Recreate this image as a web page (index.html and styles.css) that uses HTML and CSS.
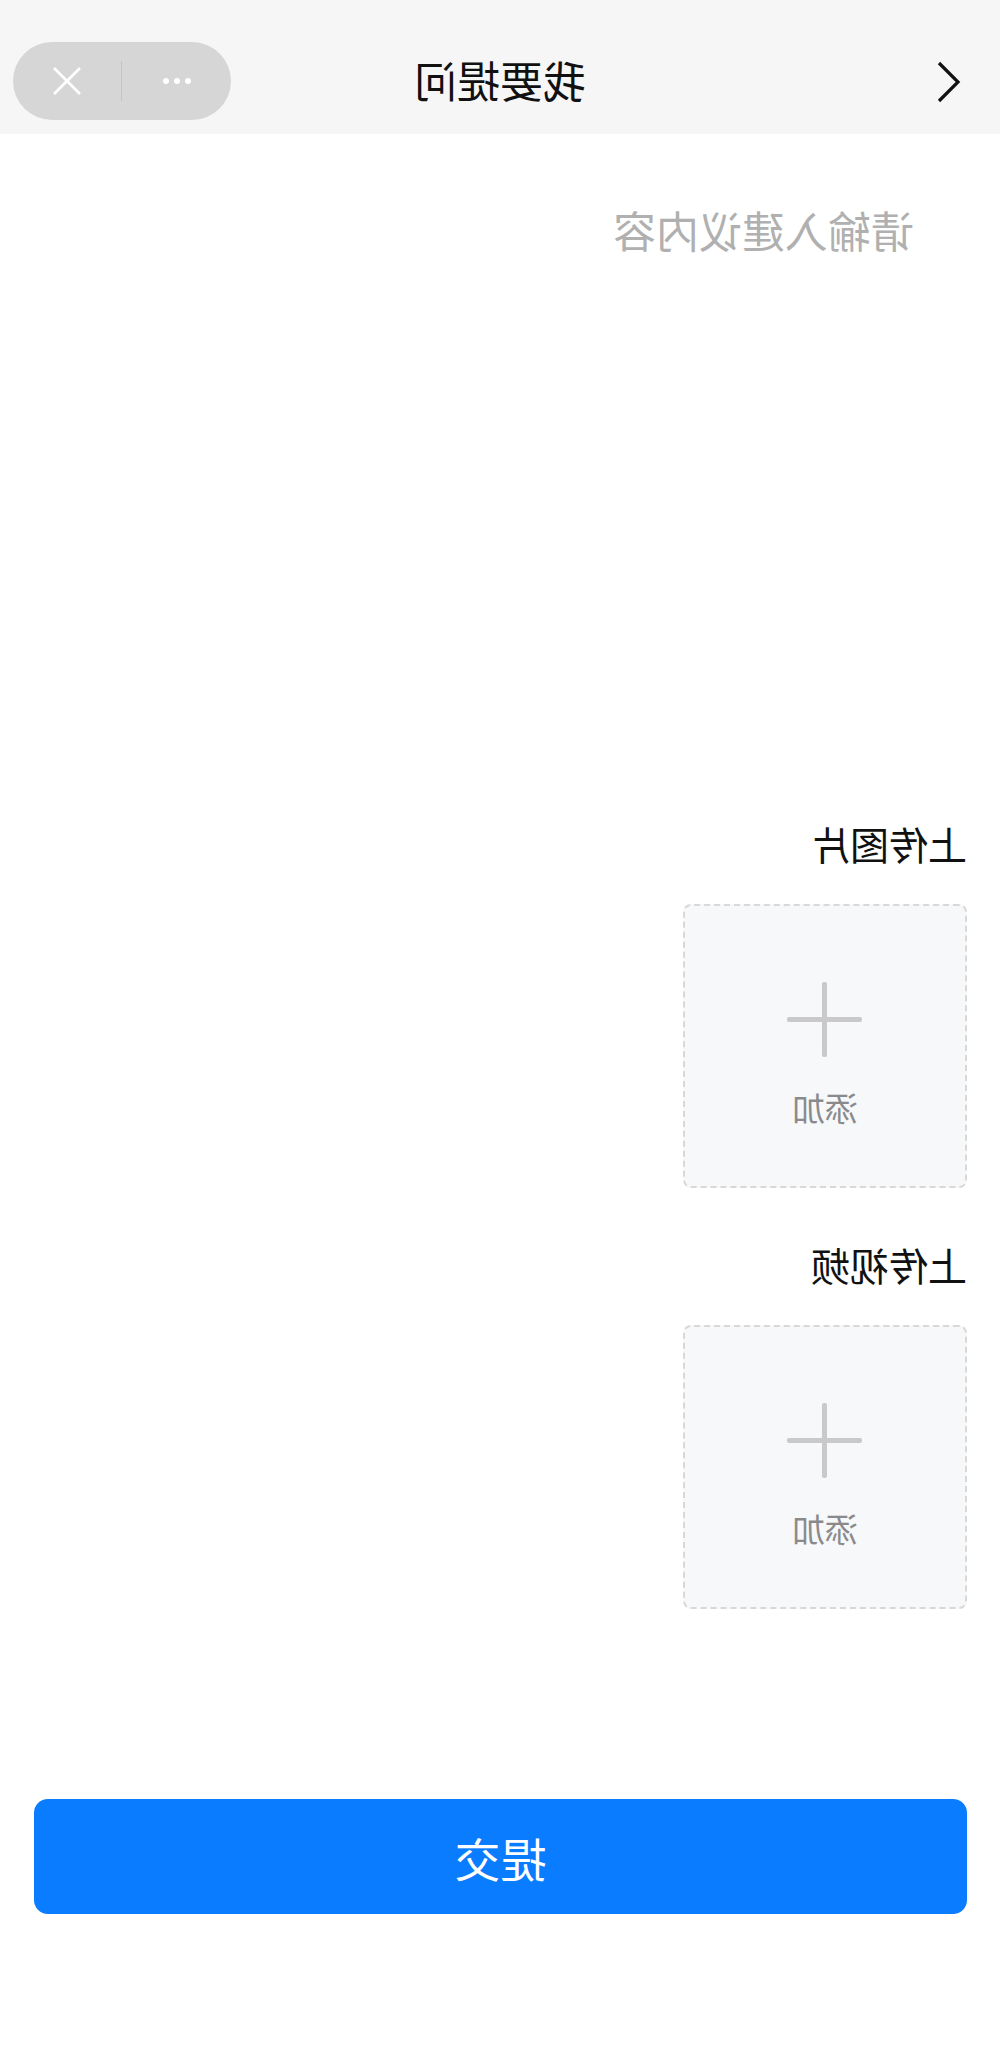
FILE: index.html
```html
<!DOCTYPE html>
<html lang="zh-CN">
<head>
    <meta charset="UTF-8">
    <meta name="viewport" content="width=device-width, initial-scale=1.0">
    <title>我要提问</title>
    <link rel="stylesheet" href="styles.css">
</head>
<body>
    <div class="page">
        <!-- nav bar -->
        <div class="navbar">
            <div class="nav-back">
                <svg width="28" height="44" viewBox="0 0 28 44">
                    <polyline points="24,3 5,22 24,41" fill="none" stroke="#111" stroke-width="3.2"/>
                </svg>
            </div>
            <div class="nav-title">我要提问</div>
            <div class="capsule">
                <div class="capsule-btn">
                    <span class="dot"></span><span class="dot"></span><span class="dot"></span>
                </div>
                <div class="capsule-line"></div>
                <div class="capsule-btn">
                    <svg width="30" height="30" viewBox="0 0 30 30">
                        <path d="M2 2 L28 28 M28 2 L2 28" stroke="#fff" stroke-width="2.6" fill="none"/>
                    </svg>
                </div>
            </div>
        </div>

        <!-- question text -->
        <textarea class="question" placeholder="请输入建议内容"></textarea>

        <!-- uploads -->
        <div class="upload">
            <div class="upload-label">上传图片</div>
            <div class="upload-box">
                <span class="plus"></span>
                <span class="upload-text">添加</span>
            </div>
        </div>
        <div class="upload upload-video">
            <div class="upload-label">上传视频</div>
            <div class="upload-box">
                <span class="plus"></span>
                <span class="upload-text">添加</span>
            </div>
        </div>

        <div class="footer">
            <button class="submit" type="button">提交</button>
        </div>
    </div>
</body>
</html>
```

FILE: styles.css
```css
*{
    box-sizing: border-box;
    margin: 0;
    padding: 0;
}
body {
    font-family: "Noto Sans CJK SC", "Noto Sans", sans-serif;
    background: #fff;
    color: #111;
}
/* the whole screen is shown mirrored */
.page {
    width: 1000px;
    min-height: 2045px;
    background: #fff;
    transform: scaleX(-1);
}
.navbar {
    position: relative;
    height: 134px;
    background: #f6f6f6;
    display: flex;
    justify-content: center;
    padding-top: 58px;
}
.nav-back {
    position: absolute;
    left: 37px;
    top: 60px;
    line-height: 0;
}
.nav-title {
    font-size: 43px;
    line-height: 1;
    color: #111;
}
.capsule {
    position: absolute;
    right: 13px;
    top: 42px;
    width: 218px;
    height: 78px;
    border-radius: 39px;
    background: #d6d6d6;
    display: flex;
    align-items: center;
}
.capsule-btn {
    flex: 1;
    height: 100%;
    display: flex;
    align-items: center;
    justify-content: center;
    gap: 5px;
    line-height: 0;
}
.capsule-line {
    width: 1px;
    height: 40px;
    background: #c4c4c4;
}
.dot {
    width: 6px;
    height: 6px;
    border-radius: 50%;
    background: #fff;
}
.question {
    display: block;
    width: 100%;
    height: 690px;
    border: none;
    outline: none;
    resize: none;
    background: #fff;
    padding: 74px 60px 0 86px;
    font-family: "Noto Sans CJK SC", "Noto Sans", sans-serif;
    font-size: 43px;
    line-height: 1;
    color: #333;
}
.question::placeholder {
    color: #b0b0b0;
}
.upload {
    padding: 0 33px;
}
.upload-video {
    margin-top: 57px;
}
.upload-label {
    font-size: 39px;
    line-height: 1;
    color: #111;
}
.upload-box {
    position: relative;
    margin-top: 41px;
    width: 284px;
    height: 284px;
    background: #f7f8fa;
    border: 2px dashed #d8d8d8;
    border-radius: 8px;
}
.plus {
    position: absolute;
    left: 103px;
    top: 76px;
    width: 75px;
    height: 75px;
}
.plus::before,
.plus::after {
    content: "";
    position: absolute;
    background: #c9c9cc;
    border-radius: 2px;
}
.plus::before {
    left: 0;
    top: 35px;
    width: 75px;
    height: 5px;
}
.plus::after {
    left: 35px;
    top: 0;
    width: 5px;
    height: 75px;
}
.upload-text {
    position: absolute;
    left: 0;
    right: 0;
    top: 185px;
    text-align: center;
    font-size: 33px;
    line-height: 1;
    color: #8a8a8c;
}
.footer {
    padding: 190px 34px 0 33px;
}
.submit {
    display: block;
    width: 100%;
    height: 115px;
    border: none;
    border-radius: 14px;
    background: #0a7cff;
    color: #fff;
    font-family: "Noto Sans CJK SC", "Noto Sans", sans-serif;
    font-size: 46px;
}
```
